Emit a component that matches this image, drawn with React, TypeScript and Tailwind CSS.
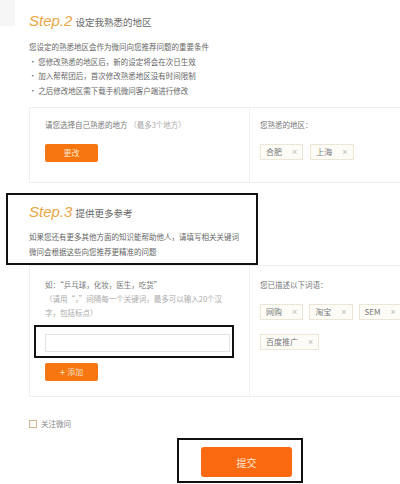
import React from "react";

const FONT = { fontFamily: '"Noto Sans CJK SC", "Noto Sans", sans-serif' };
const LATIN = { fontFamily: '"Liberation Sans", sans-serif' };

function Tag({ label }: { label: string }) {
  return (
    <span className="inline-flex h-[16px] items-center gap-[10px] border border-[#ece6d6] bg-[#fdfcf7] px-[5px] text-[8px] leading-none text-[#777]">
      {label}
      <span className="text-[9px] text-[#bbb]" style={LATIN}>×</span>
    </span>
  );
}

function OrangeButton({ children }: { children: React.ReactNode }) {
  return (
    <button
      type="button"
      className="flex h-[18px] w-[53px] items-center justify-center rounded-[2px] bg-[#f7760f] text-[8px] leading-none text-[#fde3c8]"
    >
      {children}
    </button>
  );
}

export default function App() {
  return (
    <div className="relative h-[484px] w-[400px] overflow-hidden bg-white text-[#777]" style={FONT}>
      {/* faint corner block */}
      <div className="absolute left-0 top-0 h-[26px] w-[15px] bg-[#f6f6f6]" />

      {/* Step 2 */}
      <div className="pl-[29px] pt-[13px]">
        <div className="flex items-end gap-[3px]">
          <span className="text-[15px] italic leading-[16px] text-[#eaa544]" style={LATIN}>
            Step.2
          </span>
          <span className="pb-[1px] text-[9.5px] leading-[12px] text-[#666]">设定我熟悉的地区</span>
        </div>
        <div className="mt-[11px] text-[7.5px] leading-[14.6px] text-[#666]">
          <p>您设定的熟悉地区会作为微问向您推荐问题的重要条件</p>
          <p>· 您修改熟悉的地区后，新的设定将会在次日生效</p>
          <p>· 加入帮帮团后，首次修改熟悉地区没有时间限制</p>
          <p>· 之后修改地区需下载手机微问客户端进行修改</p>
        </div>
      </div>

      {/* region box */}
      <div className="ml-[29px] mt-[9px] flex h-[76px] w-[400px] border border-[#efefef]">
        <div className="w-[220px] border-r border-[#f0f0f0] pl-[15px] pt-[11px]">
          <p className="text-[7.5px] leading-[12px] text-[#777]">
            请您选择自己熟悉的地方 <span className="text-[#aaa]">（最多3个地方）</span>
          </p>
          <div className="mt-[13px]">
            <OrangeButton>更改</OrangeButton>
          </div>
        </div>
        <div className="pl-[10px] pt-[11px]">
          <p className="text-[7.5px] leading-[12px] text-[#777]">您熟悉的地区：</p>
          <div className="mt-[13px] flex gap-[7px]">
            <Tag label="合肥" />
            <Tag label="上海" />
          </div>
        </div>
      </div>

      {/* Step 3 framed */}
      <div className="ml-[6px] mt-[10px] h-[72px] w-[252px] border-2 border-[#111] pl-[21px] pt-[9px]">
        <div className="flex items-end gap-[3px]">
          <span className="text-[15px] italic leading-[16px] text-[#eaa544]" style={LATIN}>
            Step.3
          </span>
          <span className="pb-[1px] text-[9.5px] leading-[12px] text-[#666]">提供更多参考</span>
        </div>
        <div className="mt-[9px] text-[7.5px] leading-[15px] text-[#666]">
          <p>如果您还有更多其他方面的知识能帮助他人，请填写相关关键词</p>
          <p>微问会根据这些向您推荐更精准的问题</p>
        </div>
      </div>

      {/* keyword box */}
      <div className="ml-[29px] flex h-[132px] w-[400px] border border-[#efefef]">
        <div className="w-[220px] shrink-0 border-r border-[#f0f0f0] pl-[15px] pt-[12px]">
          <div className="text-[7.5px] leading-[14px]">
            <p className="text-[#777]">如：“乒乓球，化妆，医生，吃货”</p>
            <p className="text-[#aaa]">（请用“，”间隔每一个关键词，最多可以输入20个汉</p>
            <p className="text-[#aaa]">字，包括标点）</p>
          </div>
          <div className="-ml-[11px] mt-[5px] h-[33px] w-[200px] border-2 border-[#111] pl-[9px] pt-[7px]">
            <input
              type="text"
              className="block h-[18px] w-[185px] border border-[#e3e3e3] bg-white outline-none"
            />
          </div>
          <div className="mt-[5px]">
            <OrangeButton>
              <span className="mr-[2px] text-[10px]">+</span>添加
            </OrangeButton>
          </div>
        </div>
        <div className="pl-[10px] pt-[12px]">
          <p className="text-[7.5px] leading-[14px] text-[#777]">您已描述以下词语：</p>
          <div className="mt-[12px] flex w-[170px] flex-wrap gap-x-[6px] gap-y-[14px]">
            <Tag label="网购" />
            <Tag label="淘宝" />
            <Tag label="SEM" />
            <Tag label="百度推广" />
          </div>
        </div>
      </div>

      {/* follow checkbox */}
      <div className="ml-[29px] mt-[22px] flex items-center gap-[4px]">
        <span className="h-[8px] w-[8px] border border-[#cdb58c] bg-white" />
        <span className="text-[7.5px] leading-[10px] text-[#888]">关注微问</span>
      </div>

      {/* submit */}
      <div className="ml-[177px] mt-[9px] h-[45px] w-[126px] border-2 border-[#111] pl-[22px] pt-[7px]">
        <button
          type="button"
          className="flex h-[30px] w-[91px] items-center justify-center rounded-[3px] bg-[#fb6a10] text-[10px] text-[#fde6d4]"
        >
          提交
        </button>
      </div>
    </div>
  );
}
